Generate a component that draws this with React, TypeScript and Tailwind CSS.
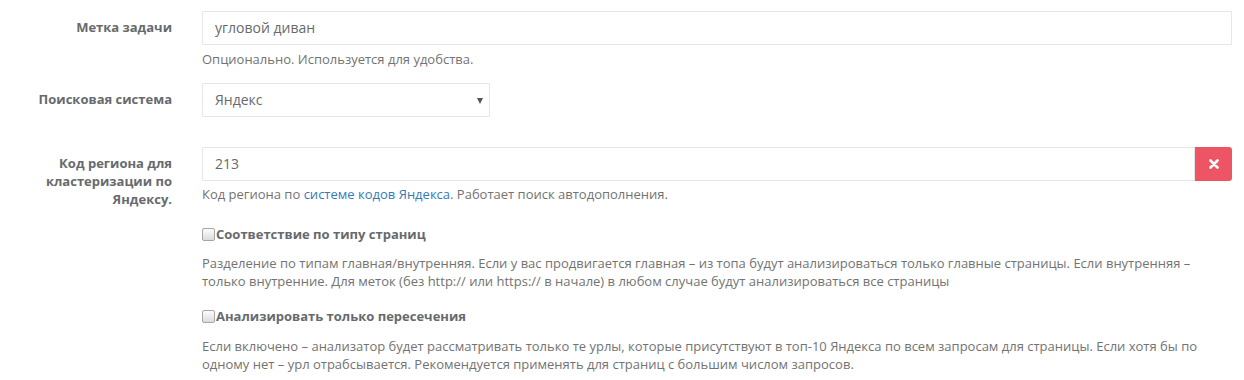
import React from "react";

const font = { fontFamily: '"Open Sans", "Noto Sans", sans-serif' };

function Label({ children }: { children: React.ReactNode }) {
  return (
    <div className="w-[172px] shrink-0 pt-[7px] text-right text-[13px] font-bold leading-[18px] text-[#676a6c]">
      {children}
    </div>
  );
}

function Checkbox() {
  return (
    <span className="mr-[1px] inline-block h-[13px] w-[13px] shrink-0 rounded-[2px] border border-[#a6a6a6] bg-gradient-to-b from-[#fcfcfc] to-[#dcdcdc] align-middle" />
  );
}

export default function App() {
  return (
    <div style={font} className="min-h-[380px] w-[1244px] bg-white pt-[11px] text-[13px] leading-[18px] text-[#676a6c]">
      {/* Row 1 */}
      <div className="flex gap-[30px]">
        <Label>Метка задачи</Label>
        <div className="w-[1030px]">
          <div className="flex h-[34px] items-center rounded-[1px] border border-[#e5e6e7] px-[12px] text-[14px] text-[#676a6c]">
            угловой диван
          </div>
          <div className="mt-[5px] text-[#737373]">Опционально. Используется для удобства.</div>
        </div>
      </div>

      {/* Row 2 */}
      <div className="mt-[15px] flex gap-[30px]">
        <Label>Поисковая система</Label>
        <div className="relative flex h-[34px] w-[288px] items-center rounded-[1px] border border-[#e5e6e7] px-[12px] text-[14px] text-[#676a6c]">
          Яндекс
          <span className="absolute right-[6px] top-[14px] h-0 w-0 border-x-[3.5px] border-t-[6px] border-x-transparent border-t-[#555]" />
        </div>
      </div>

      {/* Row 3 */}
      <div className="mt-[30px] flex gap-[30px]">
        <Label>
          Код региона для
          <br />
          кластеризации по
          <br />
          Яндексу.
        </Label>
        <div className="w-[1030px]">
          <div className="flex h-[34px]">
            <div className="flex flex-1 items-center rounded-l-[1px] border border-[#e5e6e7] px-[12px] text-[14px] text-[#676a6c]">
              213
            </div>
            <div className="flex w-[37px] items-center justify-center rounded-r-[3px] bg-[#ed5565]">
              <svg width="10" height="10" viewBox="0 0 10 10">
                <path d="M1.5 1.5 L8.5 8.5 M8.5 1.5 L1.5 8.5" stroke="#fff" strokeWidth="2.6" strokeLinecap="round" />
              </svg>
            </div>
          </div>
          <div className="mt-[4px] text-[#737373]">
            Код региона по <span className="text-[#337ab7]">системе кодов Яндекса</span>. Работает поиск автодополнения.
          </div>

          <div className="mt-[22px] flex items-center font-bold">
            <Checkbox />
            Соответствие по типу страниц
          </div>
          <div className="mt-[11px] whitespace-nowrap text-[#737373]">
            Разделение по типам главная/внутренняя. Если у вас продвигается главная – из топа будут анализироваться только главные страницы. Если внутренняя –
            <br />
            только внутренние. Для меток (без http:// или https:// в начале) в любом случае будут анализироваться все страницы
          </div>

          <div className="mt-[17px] flex items-center font-bold">
            <Checkbox />
            Анализировать только пересечения
          </div>
          <div className="mt-[12px] whitespace-nowrap text-[#737373]">
            Если включено – анализатор будет рассматривать только те урлы, которые присутствуют в топ-10 Яндекса по всем запросам для страницы. Если хотя бы по
            <br />
            одному нет – урл отрабсывается. Рекомендуется применять для страниц с большим числом запросов.
          </div>
        </div>
      </div>
    </div>
  );
}
